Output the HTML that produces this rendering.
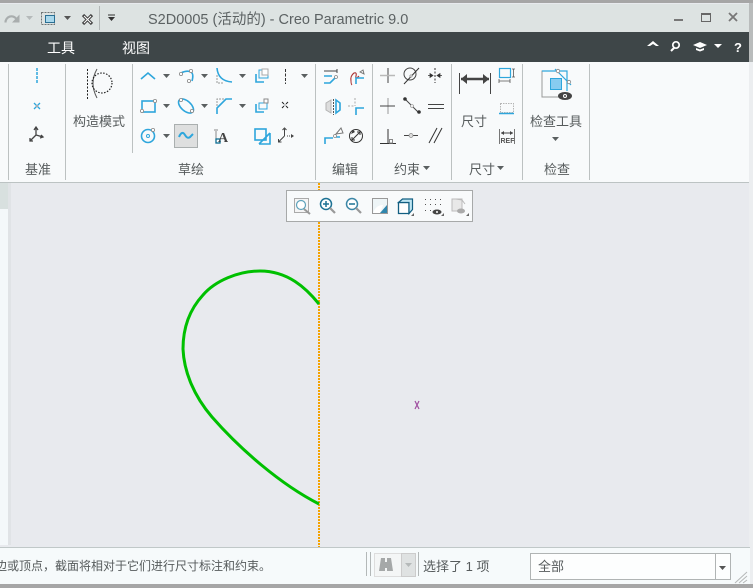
<!DOCTYPE html>
<html><head><meta charset="utf-8">
<style>
html,body{margin:0;padding:0;width:753px;height:588px;overflow:hidden;background:#e8eaee}
svg{position:absolute;left:0;top:0}
text{font-family:"Liberation Sans","Noto Sans CJK SC",sans-serif;fill:#565b5c}
.l{font-size:13px}
.b{fill:none;stroke:#2ea6dc;stroke-width:1.6}
.k{fill:none;stroke:#3a3a3a;stroke-width:1}
.g{fill:none;stroke:#b5b8b8;stroke-width:1}
.h{fill:#fff;stroke:#888;stroke-width:.8}
.a{fill:#5a5f60}
.s{fill:#b3b8b8}
</style></head><body>
<svg width="753" height="588" viewBox="0 0 753 588" xmlns="http://www.w3.org/2000/svg" shape-rendering="geometricPrecision">
<!-- base -->
<rect width="753" height="588" fill="#e8eaee"/>
<rect y="4" width="753" height="28" fill="#dde3e2"/>
<rect y="32" width="753" height="30" fill="#3e4648"/>
<rect y="62" width="753" height="120" fill="#f8fafb"/>
<rect y="182" width="753" height="1" fill="#bcc3c3"/>
<rect y="183" width="11" height="362" fill="#d8e0df"/>
<rect y="209" width="8" height="336" fill="#f4f8fa"/>
<rect x="8" y="183" width="3" height="362" fill="#e0e3e6"/>
<rect y="0" width="753" height="3" fill="#a6a6a6"/>
<rect x="749" y="3" width="4" height="582" fill="#b9bcbc"/>
<rect x="749" y="62" width="4" height="523" fill="#eceef0"/>
<rect y="547" width="750" height="1" fill="#c0c8c8"/>
<rect y="548" width="750" height="36" fill="#f6fafb"/>
<rect y="584" width="753" height="4" fill="#a6a6a6"/>

<!-- quick access -->
<path d="M5.500 22.500a6 6 0 0 1 11-3.500" fill="none" stroke="#a9aeae" stroke-width="2.200"/>
<path d="M19.500 14.500v8h-7.500z" fill="#a9aeae"/>
<path d="M26 16h7l-3.500 4z" fill="#b5baba"/>
<rect x="41.500" y="12.500" width="13" height="12" fill="none" stroke="#707575" stroke-dasharray="2 1"/>
<rect x="45.500" y="15.500" width="9" height="7" fill="#a9d8ec" stroke="#2a6f93"/>
<path d="M64 16h7l-3.500 4z" fill="#555"/>
<path d="M83 15l9 9M92 15l-9 9" stroke="#444" stroke-width="3.200"/>
<path d="M84 16l7 7M91 16l-7 7" stroke="#fff" stroke-width="1"/>
<rect x="99" y="6" width="1" height="24" fill="#b3b8b8"/>
<path d="M108 15h7" stroke="#333"/><path d="M108 17h7l-3.500 4z" fill="#333"/>
<text x="148" y="24" font-size="14.500" style="fill:#5c6263">S2D0005 (活动的) - Creo Parametric 9.0</text>

<!-- window buttons -->
<rect x="674" y="19" width="9" height="2" fill="#777"/>
<rect x="701.500" y="13.500" width="9" height="8" fill="none" stroke="#666"/><rect x="701" y="13" width="10" height="2" fill="#666"/>
<path d="M729 13l8 8M737 13l-8 8" stroke="#777" stroke-width="1.800"/>

<!-- menu -->
<text x="47" y="53" font-size="14" style="fill:#fff">工具</text>
<text x="122" y="53" font-size="14" style="fill:#fff">视图</text>
<path d="M647 46l6-5 6 5h-3l-3-2-3 2z" fill="#fff"/>
<circle cx="676" cy="45" r="3.200" fill="none" stroke="#fff" stroke-width="1.700"/><path d="M674 48l-3 3" stroke="#fff" stroke-width="2"/>
<path d="M693 45l7-3 7 3-7 3z" fill="#fff"/><path d="M696 48v2l4 1.500 4-1.500v-2l-4 1.500z" fill="#fff"/>
<path d="M714 44h8l-4 4z" fill="#fff"/>
<text x="734" y="52" font-size="13" font-weight="bold" style="fill:#fff">?</text>

<!-- separators -->
<g fill="#bcc1c1">
<rect x="8" y="64" width="1" height="116"/><rect x="65" y="64" width="1" height="116"/>
<rect x="132" y="64" width="1" height="89"/><rect x="315" y="64" width="1" height="116"/>
<rect x="372" y="64" width="1" height="116"/><rect x="451" y="64" width="1" height="116"/>
<rect x="522" y="64" width="1" height="116"/><rect x="589" y="64" width="1" height="116"/>
</g>

<!-- datum -->
<path d="M37 68v16" stroke="#2ea6dc" stroke-width="1.500" stroke-dasharray="3 1"/>
<path d="M34 103l6 6M40 103l-6 6" stroke="#2ea6dc" stroke-width="1.300"/><rect x="36" y="105" width="2" height="2" fill="#aaa"/>
<path d="M36 135v-7m-2 2l2-3 2 3M36 135l7 2m-2-2l2 2-3 1M36 135l-6 6m0-3v3h3" fill="none" stroke="#444" stroke-width="1.300"/>
<text x="25" y="174" class="l">基准</text>

<!-- construction mode -->
<path d="M87.500 69v30" stroke="#222" stroke-dasharray="2 1.500" fill="none"/>
<path d="M97 69q-8 14 0 29" fill="none" stroke="#555"/>
<circle cx="102" cy="83" r="10" fill="none" stroke="#222" stroke-width="1.200" stroke-dasharray="1.500 1.500"/>
<text x="73" y="126" class="l">构造模式</text>

<!-- sketch row 1 -->
<path class="b" d="M141 79l7-6 7 6"/>
<path d="M163 74h7l-3.500 4z" class="a"/>
<path class="b" d="M181 73q6-3 10-1 3 2 1 9"/><circle class="h" cx="181" cy="74" r="1.600"/><circle class="h" cx="191" cy="71" r="1.600"/><circle class="h" cx="189" cy="81" r="1.600"/>
<path d="M201 74h7l-3.500 4z" class="a"/>
<path class="b" d="M217 68q1 13 15 14"/><path d="M217 75v8h7" fill="none" stroke="#999" stroke-dasharray="2 1"/>
<path d="M239 74h7l-3.500 4z" class="a"/>
<path class="b" d="M256 74v8h8"/><rect x="259" y="70" width="9" height="8" fill="none" stroke="#2ea6dc"/><rect x="262" y="69" width="6" height="6" fill="#fff" stroke="#aaa"/>
<path d="M285.500 69v15" stroke="#333" stroke-dasharray="3 1.500"/>
<path d="M301 74h7l-3.500 4z" class="a"/>

<!-- sketch row 2 -->
<rect class="b" x="142" y="101" width="13" height="11"/><circle class="h" cx="142" cy="111" r="1.600"/><circle class="h" cx="155" cy="101" r="1.600"/>
<path d="M163 104h7l-3.500 4z" class="a"/>
<ellipse class="b" cx="186" cy="106" rx="9" ry="5" transform="rotate(42 186 106)"/><circle class="h" cx="181" cy="100" r="1.600"/><circle class="h" cx="192" cy="111" r="1.600"/>
<path d="M201 104h7l-3.500 4z" class="a"/>
<path class="b" d="M217 114v-6l9-9h6"/><path d="M217 106v-7h8" fill="none" stroke="#999" stroke-dasharray="2 1"/>
<path d="M239 104h7l-3.500 4z" class="a"/>
<path class="b" d="M256 104v8h8"/><rect x="259" y="103" width="8" height="6" fill="none" stroke="#2ea6dc"/><rect x="264" y="99" width="4" height="4" fill="#fff" stroke="#888"/>
<path d="M282 102l2 2M288 102l-2 2M282 108l2-2M288 108l-2-2" stroke="#222"/><rect x="284.500" y="104.500" width="1" height="1" fill="#222"/>

<!-- sketch row 3 -->
<circle class="b" cx="148" cy="136" r="6.500"/><circle cx="148" cy="136" r="1.500" fill="#fff" stroke="#2ea6dc"/><circle class="h" cx="153" cy="130" r="1.600"/>
<path d="M163 134h7l-3.500 4z" class="a"/>
<rect x="174.500" y="124.500" width="23" height="23" fill="#dedfdf" stroke="#aaafaf"/>
<path d="M179 137q3-7 6-2t6 1q1-1 2-2" class="b" style="stroke-width:2"/>
<path d="M216 131v12M214 130h4" stroke="#888"/>
<rect x="216" y="139" width="4" height="4" fill="#fff" stroke="#0d6d92" stroke-width="1.300"/>
<text x="218" y="142" font-size="14" font-weight="bold" style="font-family:'Liberation Serif',serif;fill:#444">A</text>
<rect class="b" x="255" y="129" width="11" height="11"/><path class="b" d="M259 144h11v-11M259 144l11-11"/>
<path d="M284.500 136v-7m-2 1l2-2 2 2M284.500 136l-6 6m0-3v3h3" fill="none" stroke="#444"/><path d="M287 136h3" stroke="#444" stroke-dasharray="1 1"/><path d="M291 134l3 2-3 2z" fill="#444"/>
<text x="178" y="174" class="l">草绘</text>

<!-- edit -->
<path d="M324 71h13m0-2v4" stroke="#444" fill="none"/><path class="b" d="M324 76h8M324 83h6l5-5"/><circle class="h" cx="336" cy="77" r="1.500"/>
<path d="M351 81q-1-5 3-8 3-1 2 3-1 4 3 0" fill="none" stroke="#a33" stroke-width="1.100"/><path d="M351 81q0 3 1 4" fill="none" stroke="#a33"/>
<path class="b" d="M356 84v-6h8"/><path d="M360 72l3-2 1 4z" fill="#fff" stroke="#777"/>
<path d="M326 103l5-3v13l-5-3z" fill="#ddd" stroke="#b3b3b3"/><path d="M333.500 99v16" stroke="#555" stroke-dasharray="2 1"/><path class="b" d="M336 100l4 3v7l-4 3z"/>
<path d="M355 98v8M348 106h6" stroke="#aaa" stroke-dasharray="2 1.500" fill="none"/><path class="b" d="M356 115v-7h8"/>
<path class="b" d="M325 144v-6h8M336 137h4"/><circle class="h" cx="335" cy="136" r="1.500"/><path d="M336 134l5-6 2 5z" fill="#fff" stroke="#777"/>
<circle cx="356" cy="136" r="6.500" fill="none" stroke="#333"/><path d="M351 134l2-4 2 2" fill="#333"/><path d="M352 140l8-8m-3 0h3v3m-8 2v3h3" fill="none" stroke="#333"/>
<text x="332" y="174" class="l">编辑</text>

<!-- constraints -->
<path d="M388 68v15" stroke="#444"/><path d="M380 75.500h15" stroke="#b9b9b9" stroke-width="1.500"/>
<circle cx="410" cy="74" r="6" fill="none" stroke="#444"/><path d="M404 84l15-16" stroke="#333"/><circle cx="411" cy="76" r="1.300" fill="#ccc" stroke="#888" stroke-width=".5"/>
<path d="M435 68v15" stroke="#333" stroke-dasharray="2 1.500"/><path d="M428 75.500h4m-2-2l3 2-3 2zM442 75.500h-4m2-2l-3 2 3 2z" stroke="#333" fill="#333" stroke-width=".7"/>
<path d="M388 98v16" stroke="#b9b9b9" stroke-width="1.500"/><path d="M380 106h15" stroke="#444"/>
<path d="M405 99l14 14" stroke="#444"/><circle cx="405" cy="99" r="1.800" fill="#333"/><circle cx="419" cy="112" r="1.800" fill="#333"/><circle cx="412" cy="106" r="1.500" fill="#eee" stroke="#888" stroke-width=".6"/>
<path d="M428 104.500h16M428 108.500h16" stroke="#444"/>
<path d="M388 129v14M380 143.500h16" stroke="#333"/><rect x="389.500" y="139.500" width="3" height="3.500" fill="none" stroke="#888"/>
<path d="M404 135.500h14" stroke="#444"/><circle cx="411" cy="135.500" r="2" fill="#ddd" stroke="#888" stroke-width=".7"/>
<path d="M429 143l8-15M434 143l8-15" stroke="#333"/>
<text x="394" y="174" class="l">约束</text><path d="M423 166h7l-3.500 4z" class="a"/>

<!-- dimension -->
<path d="M459.500 73v21M490.500 73v21" stroke="#444"/><path d="M461 79h28" stroke="#444" stroke-width="2.500"/><path d="M461 79l6-5v10zM489 79l-6-5v10z" fill="#444"/>
<text x="461" y="126" class="l">尺寸</text>
<rect x="499.500" y="68.500" width="11" height="9" fill="none" stroke="#2ea6dc" stroke-width="1.200"/>
<path d="M513.500 69v8M512 69h3M512 77h3M499 81h11M499 79v4M510 79v4" stroke="#555" fill="none" stroke-width=".8"/>
<rect x="500.500" y="103.500" width="13" height="9" fill="none" stroke="#b5b5b5" stroke-dasharray="1.500 1"/><path d="M499 113.500h15" stroke="#2ea6dc" stroke-width="1.500"/>
<path d="M499.500 129v15M514.500 129v15" stroke="#777"/><path d="M501 133h12" stroke="#444"/><path d="M501 133l3-2v4zM513 133l-3-2v4z" fill="#444"/>
<text x="500.500" y="143" font-size="7" font-weight="bold" style="fill:#555">REF</text>
<text x="469" y="174" class="l">尺寸</text><path d="M497 166h7l-3.500 4z" class="a"/>

<!-- inspect -->
<path d="M559 71h-17v26h17" fill="none" stroke="#999" stroke-width="1"/>
<path d="M542 71h17l8 0v20" fill="none" stroke="#2ea6dc" stroke-width="1.200"/>
<path d="M555 69l16 16" stroke="#2ea6dc" stroke-width="1.200"/>
<rect x="550.500" y="78.500" width="11" height="11" fill="#88ccf0" stroke="#2ea6dc"/>
<circle class="h" cx="558" cy="71" r="1.700"/><circle class="h" cx="569" cy="82" r="1.700"/>
<ellipse cx="565" cy="96" rx="7" ry="4" fill="#444"/><circle cx="565" cy="96" r="2" fill="#fff"/><circle cx="565" cy="96" r="1" fill="#444"/>
<text x="530" y="126" class="l">检查工具</text>
<path d="M552 137h7l-3.500 4z" class="a"/>
<text x="544" y="174" class="l">检查</text>

<!-- centerline -->
<path d="M319 183v364" stroke="#f5a300" stroke-width="2" stroke-dasharray="2 1"/>

<!-- floating toolbar -->
<rect x="286.500" y="190.500" width="186" height="31" fill="#f8fafb" stroke="#a7a9a9"/>
<rect x="294.500" y="198.500" width="14" height="14" fill="#f5f5f5" stroke="#aaa"/>
<circle cx="301" cy="205" r="4.500" fill="#fff" stroke="#5ea3bc" stroke-width="1.200"/><path d="M304 209l6 5" stroke="#999" stroke-width="2"/>
<circle cx="326" cy="204" r="5.500" fill="#fff" stroke="#1d7294" stroke-width="1.500"/><path d="M323 204h6M326 201v6" stroke="#1d7294" stroke-width="1.500"/><path d="M330 208l5 5" stroke="#999" stroke-width="2.200"/>
<circle cx="352" cy="204" r="5.500" fill="#fff" stroke="#3c87a7" stroke-width="1.500"/><path d="M349 204h6" stroke="#1d7294" stroke-width="1.500"/><path d="M356 208l5 5" stroke="#999" stroke-width="2.200"/>
<rect x="372.500" y="198.500" width="15" height="15" fill="#eef5f7" stroke="#999"/>
<path d="M373 213q3-8 10-8l-3 8z" fill="#fff"/><path d="M380 213l7-8v8z" fill="#2f86ad"/>
<path d="M398.500 202.500h10.500v11h-10.500z" fill="#fff" stroke="#125f82" stroke-width="1.300"/><path d="M398.500 202.500l4-3.500h10v10.500l-3.500 4v-11z" fill="#bfe6f3" stroke="#125f82" stroke-width="1.200"/>
<path d="M411 216h3v-3z" fill="#666"/>
<g fill="#555"><rect x="425" y="199" width="1" height="1"/><rect x="430" y="199" width="1" height="1"/><rect x="435" y="199" width="1" height="1"/><rect x="440" y="199" width="1" height="1"/><rect x="425" y="204" width="1" height="1"/><rect x="430" y="204" width="1" height="1"/><rect x="435" y="204" width="1" height="1"/><rect x="440" y="204" width="1" height="1"/><rect x="425" y="210" width="1" height="1"/><rect x="430" y="210" width="1" height="1"/></g>
<ellipse cx="437" cy="212" rx="4.500" ry="2.500" fill="#444"/><circle cx="437" cy="212" r="1" fill="#fff"/><path d="M441 216h3v-3z" fill="#666"/>
<rect x="452" y="199" width="10" height="12" fill="#e8e8e8" stroke="#bbb"/><path d="M456 199l6 1 3 4" fill="none" stroke="#bbb"/>
<ellipse cx="461" cy="211" rx="4" ry="2.500" fill="#aaa"/><path d="M466 216h3v-3z" fill="#666"/>

<!-- curve -->
<path d="M319 304 C306 288 288 271 260 271 C238 271 215 281 203 295 C191 308 183 325 183 349 C184 372 194 396 212 417 C240 449 280 484 319 504" fill="none" stroke="#00c000" stroke-width="3"/>
<path d="M415 401l4 8M419 401l-4 8" stroke="#a04ea0" stroke-width="1.200"/>

<!-- status bar -->
<text x="-5" y="570" font-size="12">边或顶点，截面将相对于它们进行尺寸标注和约束。</text>
<rect x="366" y="552" width="1" height="24" class="s"/><rect x="370" y="552" width="1" height="24" class="s"/>
<rect x="374.500" y="553.500" width="27" height="23" fill="#f4f6f6" stroke="#ddd"/>
<path d="M381 558h4v4h2v-4h4l2 13h-6v-3h-2v3h-6z" fill="#a5a8a8"/>
<rect x="401.500" y="553.500" width="14" height="23" fill="#dfe2e2" stroke="#ccc"/>
<path d="M405 563h7l-3.500 4z" fill="#b5b9b9"/>
<rect x="418" y="552" width="1" height="24" class="s"/>
<text x="423" y="571" font-size="13">选择了 1 项</text>
<rect x="530.500" y="553.500" width="200" height="26" fill="#fdfefe" stroke="#b0b4b4"/>
<rect x="715" y="554" width="1" height="25" fill="#b0b4b4"/>
<text x="538" y="571" font-size="13">全部</text>
<path d="M719 566h7l-3.500 4z" fill="#555"/>
<path d="M735 583l12-11M739 583l8-7M743 583l4-3" stroke="#b5b8b8"/>
</svg>
</body></html>
